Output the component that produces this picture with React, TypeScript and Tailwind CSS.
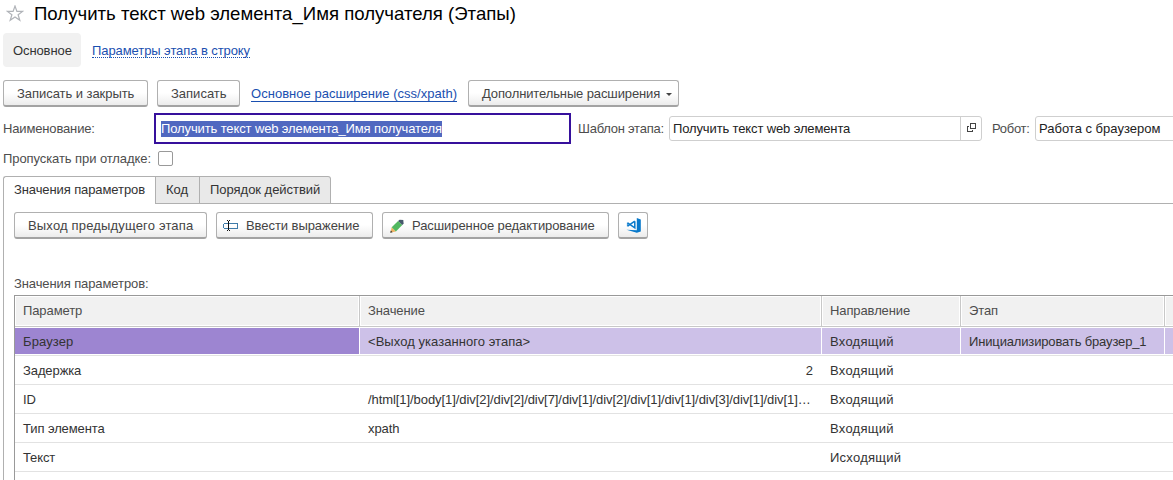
import React from "react";

const btn =
  "flex h-[27px] shrink-0 items-center rounded-[3px] border border-[#b0b0b0] border-b-2 border-b-[#a3a3a3] bg-gradient-to-b from-white from-50% to-[#ececec] text-[#444444] whitespace-nowrap";

type Row = { name: string; value: string; dir: string; right?: boolean };

const rows: Row[] = [
  { name: "Задержка", value: "2", dir: "Входящий", right: true },
  { name: "ID", value: "/html[1]/body[1]/div[2]/div[2]/div[7]/div[1]/div[2]/div[1]/div[1]/div[3]/div[1]/div[1]…", dir: "Входящий" },
  { name: "Тип элемента", value: "xpath", dir: "Входящий" },
  { name: "Текст", value: "", dir: "Исходящий" },
];

const columns = "grid grid-cols-[345px_462px_139px_204px_40px]";

function StarIcon() {
  return (
    <svg className="mt-[2px] ml-[6px] h-[18px] w-[18px] shrink-0" viewBox="0 0 18 18" fill="none" stroke="#b0b3b8" strokeWidth="1.2">
      <path d="M9 1 10.9 6.4h5.7l-4.5 3.4 1.7 5.4L9 12l-4.8 3.2 1.7-5.4L1.4 6.4h5.7Z" />
    </svg>
  );
}

function OpenIcon() {
  return (
    <svg className="h-[9px] w-[9px]" viewBox="0 0 9 9" fill="none" stroke="#444" shapeRendering="crispEdges">
      <path d="M3.5.5h5v5h-5zM2 3.5H.5v5h5V7" />
    </svg>
  );
}

function InputIcon() {
  return (
    <svg className="h-[13px] w-4" viewBox="0 0 16 13">
      <path d="M1 4h14v1H1zM1 9h14v1H1zM0 5h1v4H0zM14 5h1v4h-1z" fill="#3f7ba8" />
      <path d="M5 2h1v9H5zM4 1h1v1H4zM6 1h1v1H6zM4 11h1v1H4zM6 11h1v1H6z" fill="#111" />
    </svg>
  );
}

function PencilIcon() {
  return (
    <svg className="h-[14px] w-[14px]" viewBox="0 0 14 14">
      <path d="m.5 13.5 1.2-5.2 4.2 4.2Z" fill="#eeb262" />
      <path d="m.2 13.8.6-2.4 1.8 1.8Z" fill="#333" />
      <path d="m1.7 8.3 6.4-6.4L12.3 6l-6.4 6.4Z" fill="#52b860" />
      <path d="M8.1 1.9 9.6.7l3.7.2.3 3.5L12.3 6Z" fill="#46596b" />
    </svg>
  );
}

function CodeIcon() {
  return (
    <svg className="h-[15px] w-[15px]" viewBox="0 0 15 15">
      <path d="M10.8 0 14.8 1.4v12l-4 1.4L.5 11.7l10.3.5Z" fill="#0879cb" />
      <path d="M8.8 3.2v6.6L1.6 4.8M8.8 3.2 1.6 8.2" fill="none" stroke="#0879cb" strokeWidth="1.5" />
      <path d="M1.4 4.6v3.8" stroke="#0879cb" strokeWidth=".8" />
    </svg>
  );
}

export default function App() {
  return (
    <div className="flex h-[480px] w-[1173px] flex-col overflow-hidden bg-white font-['Liberation_Sans',Arial,sans-serif] text-[13px] leading-4 text-[#333]">
      <header className="flex h-[33px] items-start pt-[3px]">
        <StarIcon />
        <h1 className="ml-[10px] text-[18.6px] leading-[22px] whitespace-nowrap text-black">Получить текст web элемента_Имя получателя (Этапы)</h1>
      </header>
      <nav className="ml-[3px] flex h-[34px] items-center">
        <span className="flex h-full w-[78px] items-center rounded-[4px] bg-[#f1f1f1] pt-px pl-[10px] tracking-[-0.1px]">Основное</span>
        <a className="mt-[2px] ml-[11px] border-b border-dotted border-[#1a4fb0] leading-[13px] tracking-[-0.08px] whitespace-nowrap text-[#1a4fb0]">Параметры этапа в строку</a>
      </nav>
      <div className="mt-[13px] ml-[3px] flex h-[27px] items-center">
        <button className={`${btn} w-[145px] pt-px pl-[13px] tracking-[-0.05px]`}>Записать и закрыть</button>
        <button className={`${btn} ml-[9px] w-[83px] pt-px pl-[13px]`}>Записать</button>
        <a className="ml-[11px] w-[217px] whitespace-nowrap text-[#1a4fb0]">
          <span className="border-b border-[#1a4fb0] leading-[13px] tracking-[0.03px]">Основное расширение (css/xpath)</span>
        </a>
        <button className={`${btn} w-[211px] pt-px pl-[13px] tracking-[-0.12px]`}>
          Дополнительные расширения
          <span className="mt-px ml-[6px] h-0 w-0 border-x-[3px] border-t-[3px] border-x-transparent border-t-[#444]" />
        </button>
      </div>
      <div className="mt-[6px] ml-[3px] flex h-[31px] shrink-0 items-center whitespace-nowrap text-[#4d4d4d]">
        <span className="w-[151px] shrink-0 tracking-[-0.15px]">Наименование:</span>
        <div className="flex h-[31px] w-[417px] shrink-0 items-center border-2 border-[#36109c] pl-[5px]">
          <span className="bg-[#5068c0] tracking-[-0.12px] text-white">Получить текст web элемента_Имя получателя</span>
        </div>
        <span className="ml-[7px] w-[91px] shrink-0 tracking-[-0.25px]">Шаблон этапа:</span>
        <div className="flex h-[25px] w-[313px] shrink-0 rounded-[3px] border border-[#cfcfcf] text-[#222]">
          <span className="flex flex-1 items-center pl-[3px] tracking-[-0.13px]">Получить текст web элемента</span>
          <span className="flex w-[21px] items-center justify-center border-l border-[#cfcfcf] pb-[2px]"><OpenIcon /></span>
        </div>
        <span className="ml-[10px] w-[43px] shrink-0 tracking-[-0.3px]">Робот:</span>
        <div className="flex h-[25px] w-[160px] shrink-0 items-center rounded-[3px] border border-[#cfcfcf] pl-[3px] text-[#222]">Работа с браузером</div>
      </div>
      <div className="mt-[7px] ml-[3px] flex h-[15px] shrink-0 items-center whitespace-nowrap text-[#4d4d4d]">
        <span className="w-[155px] tracking-[-0.08px]">Пропускать при отладке:</span>
        <span className="h-[15px] w-[15px] rounded-[2px] border border-[#999]" />
      </div>
      <div className="mt-[10px] ml-[3px] flex h-[28px] shrink-0">
        <div className="flex w-[152px] items-center rounded-tl-[3px] border-t border-l border-[#b0b0b0] pb-px pl-[10px] tracking-[-0.1px] whitespace-nowrap">Значения параметров</div>
        <div className="flex w-[45px] items-center border border-[#b0b0b0] bg-[#e9e9e9] pl-[10px]">Код</div>
        <div className="flex w-[131px] items-center rounded-tr-[3px] border border-l-0 border-[#b0b0b0] bg-[#e9e9e9] pl-[10px] tracking-[-0.03px] whitespace-nowrap">Порядок действий</div>
        <div className="flex-1 border-b border-[#b0b0b0]" />
      </div>
      <main className="ml-[3px] flex flex-1 flex-col border-l border-[#b0b0b0] pl-[10px]">
        <div className="mt-[8px] flex h-[27px] shrink-0">
          <button className={`${btn} w-[193px] pt-px pl-[13px] tracking-[0.17px]`}>Выход предыдущего этапа</button>
          <button className={`${btn} ml-[9px] w-[157px] gap-[7px] pt-px pl-[6px] tracking-[-0.06px]`}><InputIcon />Ввести выражение</button>
          <button className={`${btn} ml-[9px] w-[227px] gap-[8px] pt-px pl-[7px] tracking-[-0.08px]`}><PencilIcon />Расширенное редактирование</button>
          <button className={`${btn} ml-[9px] w-[30px] justify-center pt-px`}><CodeIcon /></button>
        </div>
        <div className="mt-[36px] h-5 shrink-0 leading-[17px] tracking-[-0.1px] text-[#4d4d4d]">Значения параметров:</div>
        <section className="flex-1 border-t border-l border-[#999]">
          <div className={`${columns} h-[31px] border-b border-[#c8c8c8] text-[#4d4d4d]`}>
            {["Параметр", "Значение", "Направление", "Этап", ""].map((h) => (
              <div key={h} className="border-r border-[#c8c8c8] p-px">
                <div className="flex h-full items-center bg-[#f1f1f1] pl-[7px] tracking-[-0.1px]">{h}</div>
              </div>
            ))}
          </div>
          <div className={`${columns} h-[29px] border-b border-[#e2e2e2] pt-px pb-px`}>
            <div className="flex items-center border-r border-white bg-[#9d85d1] pt-px pl-2 tracking-[0.1px]">Браузер</div>
            <div className="flex items-center border-r border-white bg-[#cdc1e8] pt-px pl-2 tracking-[0.05px]">&lt;Выход указанного этапа&gt;</div>
            <div className="flex items-center border-r border-white bg-[#cdc1e8] pt-px pl-2 tracking-[0.25px]">Входящий</div>
            <div className="flex items-center border-r border-white bg-[#cdc1e8] pt-px pl-2 tracking-[-0.15px] whitespace-nowrap">Инициализировать браузер_1</div>
            <div className="bg-[#cdc1e8]" />
          </div>
          {rows.map((r) => (
            <div key={r.name} className={`${columns} h-[29px] items-center border-b border-[#e2e2e2] pt-[2px]`}>
              <span className="pl-2 tracking-[-0.1px]">{r.name}</span>
              <span className={r.right ? "pr-[9px] text-right" : "pl-2 tracking-[-0.07px] whitespace-nowrap"}>{r.value}</span>
              <span className="pl-2 tracking-[0.25px]">{r.dir}</span>
            </div>
          ))}
        </section>
      </main>
    </div>
  );
}
